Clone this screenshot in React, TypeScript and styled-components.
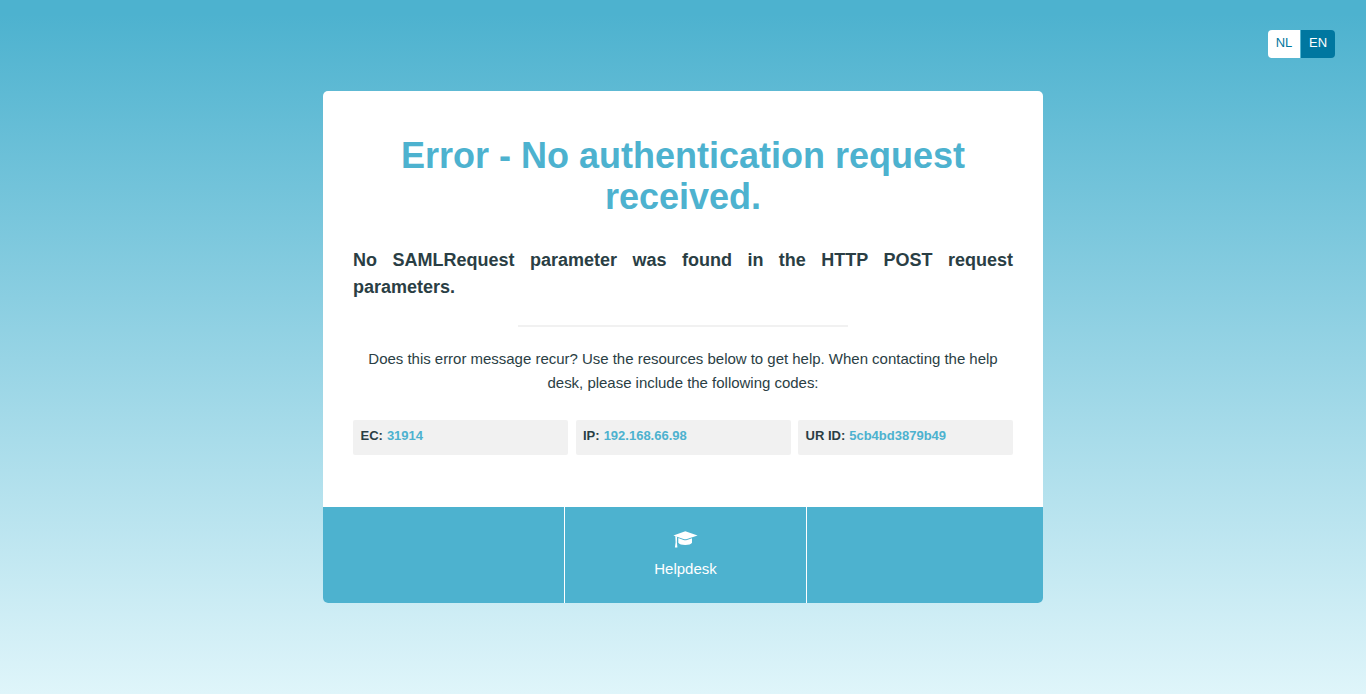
import React from 'react';
import styled, { createGlobalStyle } from 'styled-components';

const Global = createGlobalStyle`
  *, *::before, *::after { box-sizing: border-box; }
  body { margin: 0; font-family: "Liberation Sans", Arial, sans-serif; color: #2a3e44; }
`;

const Page = styled.div`
  min-height: 100vh;
  display: flex;
  flex-direction: column;
  align-items: center;
  background: linear-gradient(#4db2cf 0%, #4db2cf 2%, #dff5fa 100%);
`;

const TopBar = styled.nav`
  align-self: flex-end;
  display: flex;
  height: 28px;
  margin: 30px 31px 33px 0;
  border-radius: 4px;
  overflow: hidden;
`;

const Language = styled.a<{ $active?: boolean; $width: number }>`
  width: ${p => p.$width}px;
  font-size: 13px;
  line-height: 26px;
  text-align: center;
  background: ${p => (p.$active ? '#0077a0' : '#fff')};
  color: ${p => (p.$active ? '#fff' : '#0077a0')};

  & + & { margin-left: 1px; }
`;

const Card = styled.main`
  width: 720px;
  height: 512px;
  display: flex;
  flex-direction: column;
  background: #fff;
  border-radius: 5px;
  overflow: hidden;
`;

const Content = styled.div`
  flex: 1;
  padding: 44px 30px 0;
`;

const Title = styled.h1`
  margin: 0;
  font-size: 36px;
  line-height: 41px;
  text-align: center;
  color: #4db2cf;
`;

const Lead = styled.p`
  margin: 30px 0 0;
  font-size: 18px;
  line-height: 27px;
  font-weight: bold;
  text-align: justify;
`;

const Divider = styled.hr`
  width: 330px;
  height: 2px;
  margin: 24px auto 20px;
  border: 0;
  background: #f1f1f1;
`;

const Help = styled.p`
  margin: 0;
  font-size: 15px;
  line-height: 24px;
  letter-spacing: -0.02px;
  text-align: center;
`;

const Codes = styled.dl`
  display: flex;
  justify-content: space-between;
  margin: 25px 0 0;
`;

const Code = styled.div`
  display: flex;
  gap: 4px;
  width: 215px;
  height: 35px;
  padding: 0 7.5px;
  border-radius: 2px;
  background: #f1f1f1;
  font-size: 13px;
  font-weight: bold;
  line-height: 31px;
`;

const Value = styled.dd`
  margin: 0;
  color: #4db2cf;
`;

const Footer = styled.footer`
  display: flex;
  height: 96px;
  background: #4db2cf;
`;

const Slot = styled.div`
  width: 242px;
  flex-shrink: 0;
  display: flex;
  flex-direction: column;
  align-items: center;
  padding-top: 24px;
  border-right: 1px solid #fff;
  color: #fff;
  font-size: 15px;
  line-height: 24px;

  &:last-child { width: 236px; border: 0; }
`;

const CapIcon = styled.svg`
  display: block;
  width: 25px;
  height: 17px;
  margin-bottom: 9px;
  fill: #fff;
`;

const codes = [['EC:', '31914'], ['IP:', '192.168.66.98'], ['UR ID:', '5cb4bd3879b49']];

export default function App() {
  return (
    <>
      <Global />
      <Page>
        <TopBar>
          <Language $width={32}>NL</Language>
          <Language $width={34} $active>EN</Language>
        </TopBar>
        <Card>
          <Content>
            <Title>Error - No authentication request received.</Title>
            <Lead>No SAMLRequest parameter was found in the HTTP POST request parameters.</Lead>
            <Divider />
            <Help>Does this error message recur? Use the resources below to get help. When contacting the help desk, please include the following codes:</Help>
            <Codes>
              {codes.map(([label, value]) => (
                <Code key={label}><dt>{label}</dt><Value>{value}</Value></Code>
              ))}
            </Codes>
          </Content>
          <Footer>
            <Slot />
            <Slot>
              <CapIcon viewBox="0 0 25 17">
                <path d="M12.3 0.3 L24.6 4.4 L14 8 Q12.3 8.5 10.5 8 L0.4 4.4 Z" />
                <path d="M5.3 7.1 L10.5 8.9 Q12.3 9.4 14 8.9 L19 7.2 V11.8 Q17.5 14 12.2 14 Q7 14 5.3 11.8 Z" />
                <path d="M2.3 5 L4.1 5.6 L3.9 11.2 L4.4 16.4 H1.9 L2.6 11.2 Z" />
              </CapIcon>
              Helpdesk
            </Slot>
            <Slot />
          </Footer>
        </Card>
      </Page>
    </>
  );
}
